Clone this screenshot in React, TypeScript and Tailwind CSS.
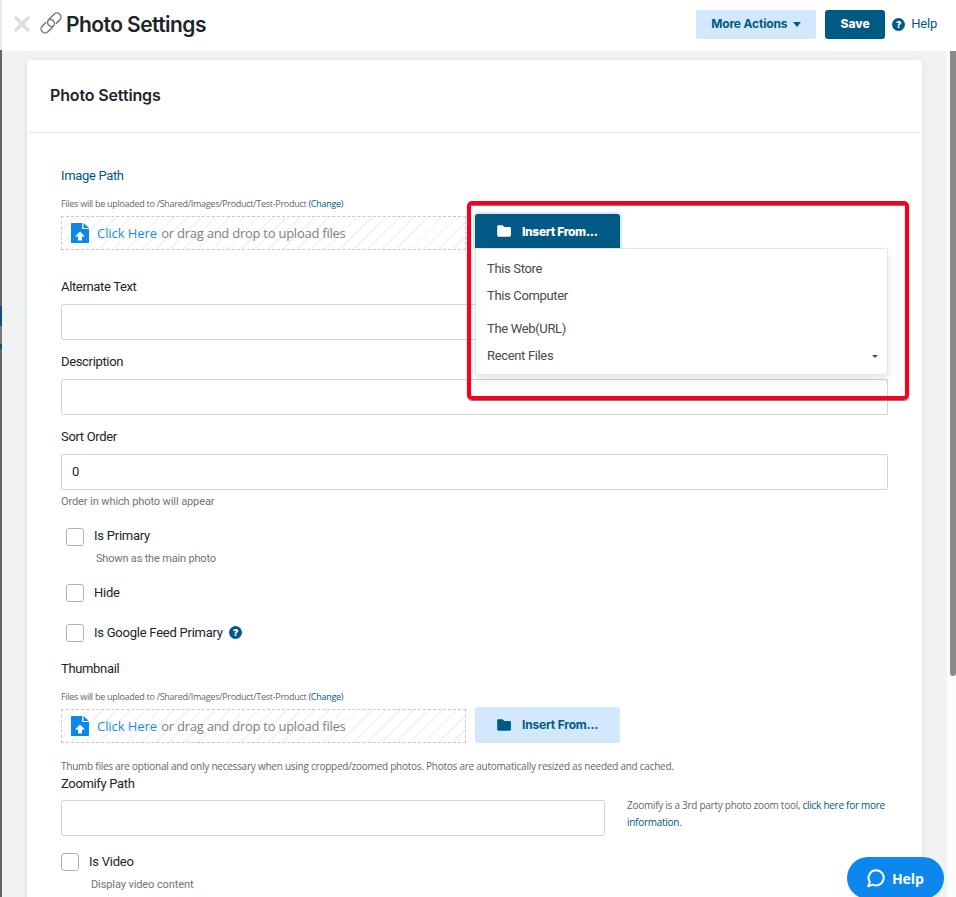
import type { ReactNode } from 'react';

const BODY_FONT = "font-['Roboto','Liberation_Sans',sans-serif]";
const HEADING_FONT = "font-['Inter','Liberation_Sans',sans-serif]";
const NOTE_FONT = "font-['Open_Sans','Noto_Sans',sans-serif]";

function CloseIcon() {
  return (
    <svg className="w-4 h-4 shrink-0" viewBox="0 0 16 16" fill="none" stroke="#dedede" strokeWidth={3.2} strokeLinecap="round">
      <path d="M2 2l12 12M14 2L2 14" />
    </svg>
  );
}

function LinkIcon() {
  return (
    <svg className="w-[22px] h-[22px] shrink-0" viewBox="0 0 22 22" fill="none" stroke="#7c7c7c" strokeWidth={1.5} strokeLinecap="round">
      <g transform="rotate(-45 11 11)">
        <path d="M14.500 15H19.400a4 4 0 000-8H11.800a4 4 0 00-4 4c0 1.300.5 2.300 1.400 3" />
        <path d="M7.500 7H2.600a4 4 0 000 8H10.200a4 4 0 004-4c0-1.300-.5-2.300-1.400-3" />
      </g>
    </svg>
  );
}

function QuestionIcon() {
  return (
    <span className={`${HEADING_FONT} w-[13px] h-[13px] shrink-0 rounded-full bg-[#005a84] text-white text-[9px] leading-[13px] font-black flex items-center justify-center`}>
      ?
    </span>
  );
}

function UploadIcon() {
  return (
    <svg className="w-[18px] h-5 shrink-0" viewBox="0 0 18 20">
      <path fill="#0b87ee" d="M.5 0h10.700v6H18v13.500a.5.5 0 01-.5.5H.5a.5.5 0 01-.5-.5V.5A.5.5 0 01.5 0z" />
      <path fill="#0b87ee" d="M12.500 0L18 4.900h-5.500z" />
      <path fill="#fff" d="M9 8.500l5 5h-3v4H7v-4H4z" />
    </svg>
  );
}

function FolderIcon() {
  return (
    <svg className="w-[14px] h-3 shrink-0" viewBox="0 0 14 12" fill="currentColor">
      <path d="M1.400.3h4.200L7.200 2h5.500c.7 0 1.200.5 1.200 1.200v7.300c0 .7-.5 1.200-1.200 1.200H1.400C.7 11.700.2 11.200.2 10.500v-9C.2.8.7.3 1.400.3z" />
    </svg>
  );
}

function ChatIcon() {
  return (
    <svg className="w-[18px] h-[19px] shrink-0" viewBox="0 0 18 19" fill="none" stroke="#fff" strokeWidth={2} strokeLinejoin="round">
      <path d="M9.200 1.200a7.600 7.600 0 11-3.500 14.400L1.200 17.200l1.600-4.300A7.600 7.600 0 019.200 1.200z" />
    </svg>
  );
}

function Label({ children, className = '' }: { children: ReactNode; className?: string }) {
  return <label className={`block h-5 leading-5 text-[13px] tracking-[-0.34px] ${className}`}>{children}</label>;
}

function TextInput({ value = '', className = '' }: { value?: string; className?: string }) {
  return (
    <input
      type="text"
      defaultValue={value}
      className={`block h-9 border border-[#d5d5d5] rounded-[2px] bg-white px-[10px] pb-[2px] text-[13px] outline-none ${className}`}
    />
  );
}

function CheckRow({ label, className = '', children }: { label: string; className?: string; children?: ReactNode }) {
  return (
    <div className={`flex items-center h-[18px] ${className}`}>
      <span className="w-[18px] h-[18px] shrink-0 border border-[#b0b0b0] rounded-[3px] bg-white" />
      <span className="ml-[10px] text-[13px] leading-[18px] tracking-[-0.24px]">{label}</span>
      {children}
    </div>
  );
}

function UploadNote() {
  return (
    <p className={`${NOTE_FONT} mt-[10px] h-4 leading-4 text-[9px] tracking-[-0.28px] text-[#666] whitespace-nowrap`}>
      Files will be uploaded to /Shared/Images/Product/Test-Product <a className="text-[#005a84] font-medium">(Change)</a>
    </p>
  );
}

function DropZone() {
  return (
    <div className={`${NOTE_FONT} w-[405px] h-[34px] shrink-0 flex items-center border border-dashed border-[#c9c9c9] pl-[9px] text-[13px] tracking-[-0.25px] text-[#808080] bg-[repeating-linear-gradient(135deg,#fff_0px,#fff_8px,#f5f5f5_8px,#f5f5f5_10px)]`}>
      <UploadIcon />
      <span className="ml-2 pt-[2px] whitespace-nowrap">
        <a className="mr-px tracking-[-0.06px] text-[#1b8ceb]">Click Here</a> or drag and drop to upload files
      </span>
    </div>
  );
}

function InsertMenu() {
  return (
    <div className="absolute left-0 top-[34px] z-10 w-[413px] h-[127px] bg-white border border-[#e6e6e6] rounded-b-[4px] shadow-[0_5px_10px_rgba(0,0,0,0.1)] pl-[11px] pr-[9px] pt-[10px] text-[13px] leading-5 tracking-[-0.34px] text-[#4a4a4a]">
      <div>This Store</div>
      <div className="mt-[7px]">This Computer</div>
      <div className="mt-[13px]">The Web(URL)</div>
      <div className="mt-[7px] flex items-center justify-between">
        <span>Recent Files</span>
        <span className="border-x-[3px] border-x-transparent border-t-[3px] border-t-[#4a4a4a]" />
      </div>
    </div>
  );
}

export default function App() {
  return (
    <div className={`${BODY_FONT} relative flex w-[956px] h-[897px] overflow-hidden bg-white text-[#212529]`}>
      <div className="w-[2px] shrink-0 flex flex-col">
        <div className="h-[50px] bg-[#e8e8e8]" />
        <div className="h-[256px] bg-[#666]" />
        <div className="h-5 bg-[#174f7c]" />
        <div className="h-[18px] bg-[#777]" />
        <div className="h-[5px] bg-[#174f7c]" />
        <div className="flex-1 bg-[#666]" />
      </div>

      <div className="flex-1 min-w-0 flex flex-col">
        <header className="h-[51px] shrink-0 flex items-center bg-white pl-3 pr-[19px] pb-[3px]">
          <CloseIcon />
          <span className="ml-[10px] -mt-[3px]">
            <LinkIcon />
          </span>
          <h1 className={`${HEADING_FONT} ml-1 pt-[2px] text-[21px] leading-7 font-semibold tracking-[-0.56px] whitespace-nowrap`}>Photo Settings</h1>
          <button className={`${HEADING_FONT} ml-auto w-[120px] h-[29px] rounded-[3px] bg-[#d2e8fd] text-[#005a84] text-[12px] font-bold tracking-[-0.16px] flex items-center pl-[15px] gap-[6px] whitespace-nowrap`}>
            More Actions
            <span className="border-x-[4.5px] border-x-transparent border-t-[5px] border-t-[#005a84]" />
          </button>
          <button className={`${HEADING_FONT} ml-[9px] w-[60px] h-[29px] rounded-[3px] bg-[#005a84] text-white text-[12px] font-extrabold`}>
            Save
          </button>
          <a className="ml-[7px] flex items-center gap-[6px] text-[13px] tracking-[-0.2px] text-[#005a84]">
            <QuestionIcon />
            Help
          </a>
        </header>

        <div className="flex-1 min-h-0 flex">
          <main className="w-[945px] shrink-0 bg-[#f1f2f4] pl-[25px] pt-[9px] overflow-hidden">
            <section className="w-[895px] h-[900px] bg-white rounded-t-[4px] shadow-[0_1px_8px_rgba(0,0,0,0.07)]">
              <div className="h-[73px] border-b border-[#e9eaeb] pl-[23px] pb-[2px] flex items-center">
                <h2 className={`${HEADING_FONT} text-[16px] font-semibold tracking-[-0.14px]`}>Photo Settings</h2>
              </div>

              <div className="pl-[34px] pt-[33px]">
                <Label className="text-[#005a84]">Image Path</Label>
                <UploadNote />
                <div className="mt-[2px] flex items-end gap-[9px] h-9">
                  <DropZone />
                  <div className="relative w-[145px] h-9">
                    <button className={`${HEADING_FONT} w-[145px] h-[34px] rounded-t-[3px] bg-[#005a84] text-white text-[12px] font-extrabold tracking-[-0.35px] flex items-center pl-[22px] gap-[11px] shadow-[0_0_0_2px_#dbe7f1] whitespace-nowrap`}>
                      <FolderIcon />
                      <span className="pt-[2px]">Insert From...</span>
                    </button>
                    <InsertMenu />
                  </div>
                </div>

                <Label className="mt-[27px]">Alternate Text</Label>
                <TextInput className="mt-[7px] w-[827px]" />
                <Label className="mt-3">Description</Label>
                <TextInput className="mt-[7px] w-[827px]" />
                <Label className="mt-3">Sort Order</Label>
                <TextInput className="mt-[7px] w-[827px]" value="0" />
                <p className="mt-1 h-4 leading-4 text-[11px] tracking-[-0.1px] text-[#6c757d]">Order in which photo will appear</p>

                <CheckRow label="Is Primary" className="mt-[18px] ml-[5px] [&>span:last-child]:pb-[2px]" />
                <p className="mt-[5px] ml-[35px] h-4 leading-4 text-[11px] tracking-[-0.18px] text-[#6c757d]">Shown as the main photo</p>
                <CheckRow label="Hide" className="mt-[17px] ml-[5px]" />
                <CheckRow label="Is Google Feed Primary" className="mt-[22px] ml-[5px]">
                  <span className="ml-[6.5px] pb-px">
                    <QuestionIcon />
                  </span>
                </CheckRow>

                <Label className="mt-[17px]">Thumbnail</Label>
                <UploadNote />
                <div className="mt-[2px] flex items-end gap-[9px] h-9">
                  <DropZone />
                  <button className={`${HEADING_FONT} w-[145px] h-9 rounded-[3px] bg-[#d2e8fd] text-[#005a84] text-[12px] font-bold tracking-[-0.2px] flex items-center pl-[22px] gap-[11px] whitespace-nowrap`}>
                    <FolderIcon />
                    Insert From...
                  </button>
                </div>
                <p className={`${NOTE_FONT} mt-[15px] h-4 leading-4 text-[10px] tracking-[-0.245px] text-[#666] whitespace-nowrap`}>
                  Thumb files are optional and only necessary when using cropped/zoomed photos. Photos are automatically resized as needed and cached.
                </p>
                <Label>Zoomify Path</Label>
                <div className="mt-[6px] flex gap-[22px]">
                  <TextInput className="w-[544px]" />
                  <p className={`${NOTE_FONT} -mt-[3px] leading-[17px] text-[10px] tracking-[-0.27px] text-[#666] whitespace-nowrap`}>
                    Zoomify is a 3rd party photo zoom tool, <a className="text-[#005a84] font-medium">click here for more</a>
                    <br />
                    <a className="text-[#005a84] font-medium">information</a>.
                  </p>
                </div>
                <CheckRow label="Is Video" className="mt-[17px]" />
                <p className="mt-[6px] ml-[30px] h-4 leading-4 text-[11px] tracking-[-0.1px] text-[#6c757d]">Display video content</p>
              </div>
            </section>
          </main>
          <div className="flex-1 bg-[#fcfcfc] pl-[3px]">
            <div className="w-[6px] h-[625px] bg-[#8a8a8a] rounded-b-[3px]" />
          </div>
        </div>
      </div>

      {/* highlight around the insert menu */}
      <div className="absolute left-[467px] top-[201px] z-20 w-[442px] h-[199px] border-4 border-[#f8001f] rounded-[5px] shadow-[0_1px_1px_#777,inset_0_1px_1px_#777]" />

      <button className={`${NOTE_FONT} absolute left-[847px] top-[857px] z-20 w-[97px] h-[42px] rounded-full bg-[#0b87ee] text-white text-[14px] font-bold tracking-[-0.1px] flex items-center pl-5 pt-px gap-[7px]`}>
        <ChatIcon />
        Help
      </button>
    </div>
  );
}
